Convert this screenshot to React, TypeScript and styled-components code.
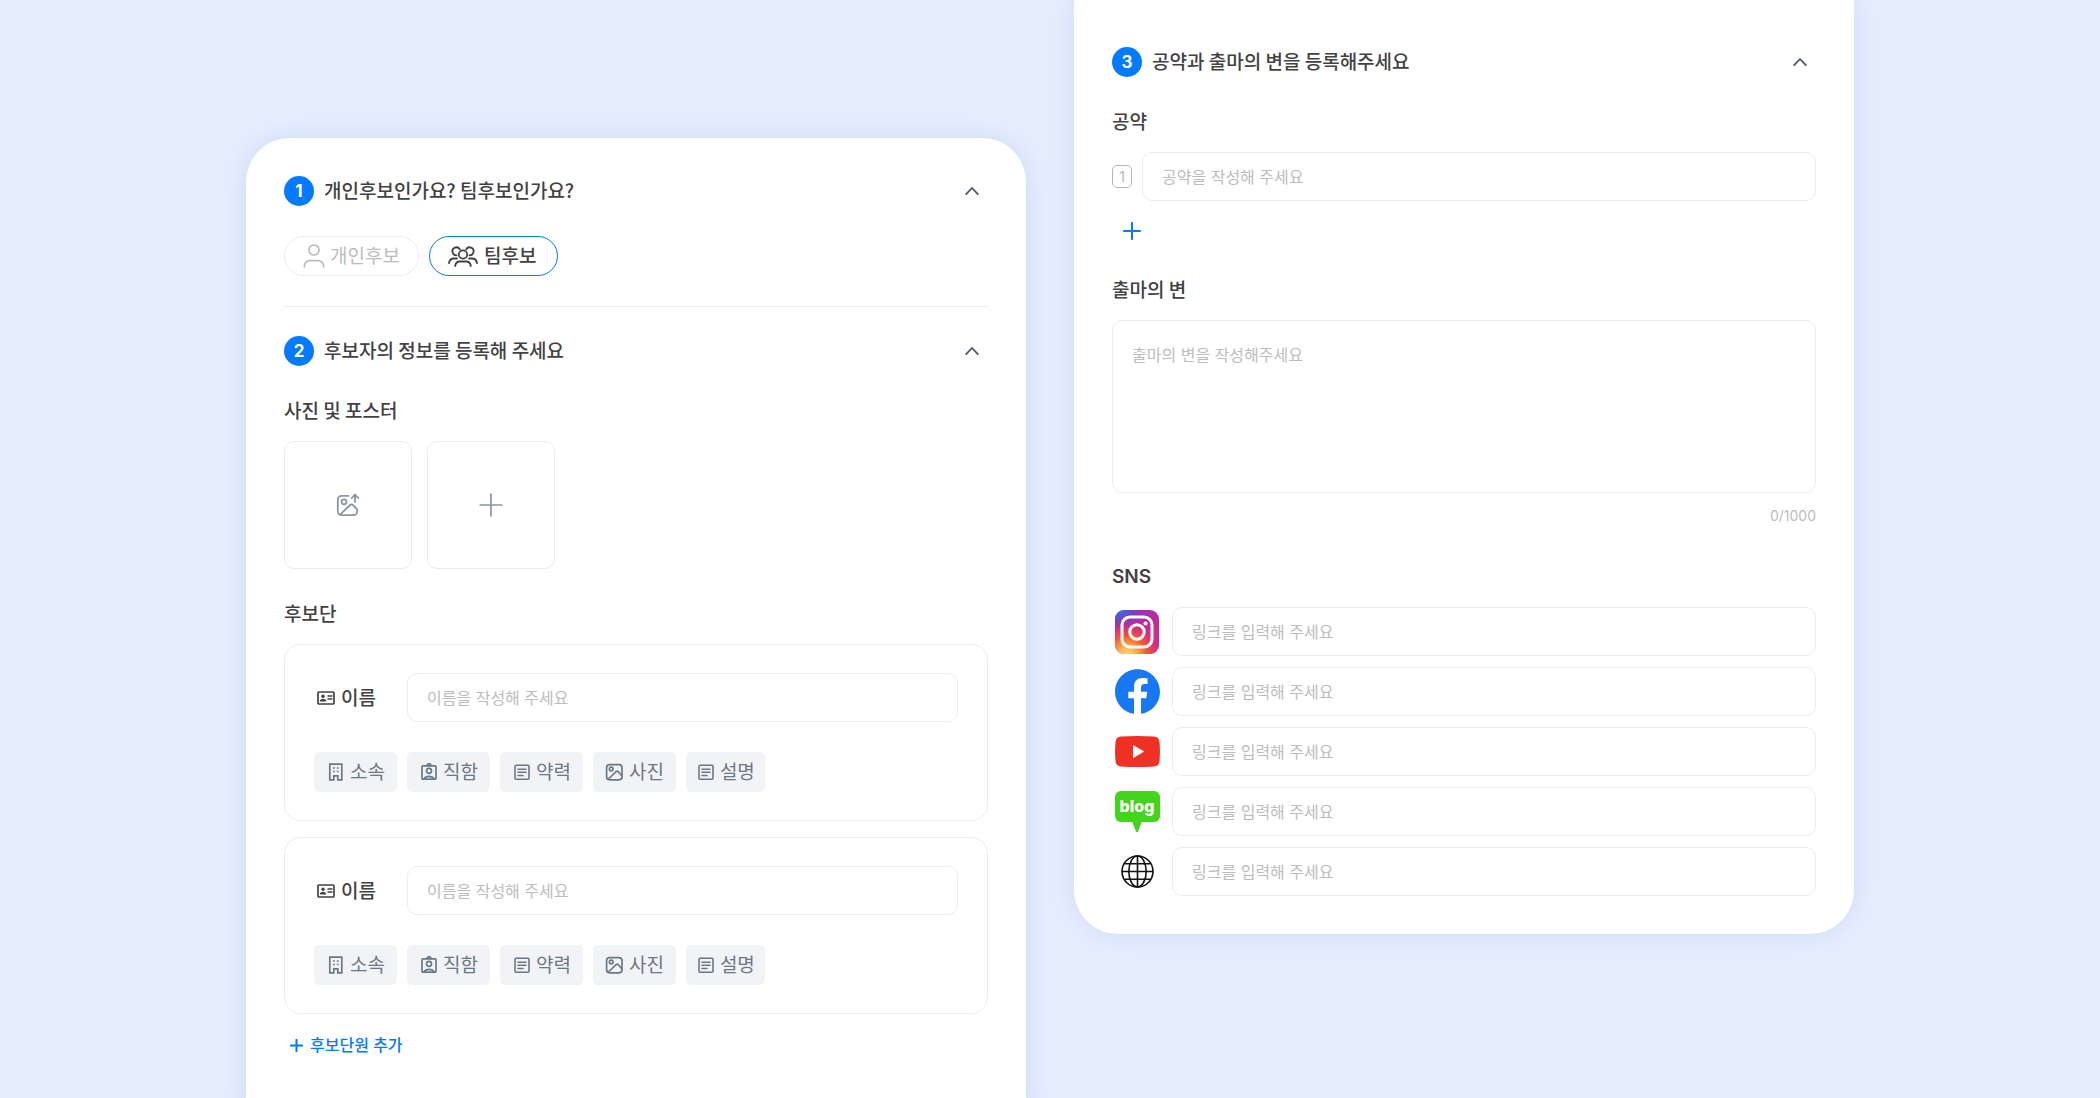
import React, { useState } from 'react';
import styled, { createGlobalStyle } from 'styled-components';

const color = {
  page: '#e6edfd',
  card: '#ffffff',
  line: '#ececed',
  text: '#424242',
  blue: '#047bff',
  placeholder: '#bcbcbc',
  slate: '#6b7887',
  slateLight: '#8a95a5',
  chip: '#f2f3f6',
};

const fieldFont = 'Inter, "Noto Sans CJK KR", sans-serif';

const GlobalStyle = createGlobalStyle`
  *, *::before, *::after { box-sizing: border-box; }
  body {
    margin: 0;
    background: ${color.page};
    color: ${color.text};
    font-family: "Noto Sans CJK KR", "Noto Sans", sans-serif;
  }
  button, input, textarea { font: inherit; color: inherit; }
  h2, h3 { margin: 0; }
`;

const Page = styled.main`
  display: grid;
  grid-template-columns: repeat(2, minmax(0, 780px));
  justify-content: center;
  column-gap: 48px;
  height: 100vh;
  overflow: hidden;
`;

const Card = styled.form`
  background: ${color.card};
  box-shadow: 0 0 24px rgba(150, 180, 245, 0.32);
`;

const LeftCard = styled(Card)`
  margin-top: 138px;
  padding: 38px 38px 60px;
  border-radius: 44px 44px 0 0;
`;

const RightCard = styled(Card)`
  align-self: start;
  padding: 47px 38px 38px;
  border-radius: 0 0 44px 44px;
`;

const Header = styled.header`
  display: flex;
  align-items: center;
  gap: 10px;
  height: 30px;
`;

const StepNumber = styled.span`
  display: grid;
  place-items: center;
  width: 30px;
  height: 30px;
  border-radius: 50%;
  background: ${color.blue};
  color: #fff;
  font: 700 17px/30px Inter, sans-serif;
`;

const Title = styled.h2`
  flex: 1;
  padding-bottom: 2px;
  font-size: 19px;
  line-height: 28px;
  font-weight: 500;
`;

const IconButton = styled.button`
  display: grid;
  place-items: center;
  width: 32px;
  height: 28px;
  padding: 0;
  border: 0;
  background: none;
  color: #4a5766;
  cursor: pointer;
`;

const AddPledge = styled(IconButton)`
  width: 40px;
  margin-top: 16px;
  color: ${color.blue};
`;

const Divider = styled.hr`
  height: 1px;
  margin: 30px 0 29px;
  border: 0;
  background: ${color.line};
`;

const Label = styled.h3`
  margin: 32px 0 19px;
  font-size: 19px;
  line-height: 24px;
  font-weight: 500;
`;

const LatinLabel = styled(Label)`
  margin: 39px 0 18px;
  font-family: Inter, sans-serif;
  font-weight: 600;
`;

const PillGroup = styled.div`
  display: flex;
  gap: 10px;
  margin-top: 30px;
`;

const Pill = styled.label<{ $active: boolean }>`
  display: flex;
  align-items: center;
  gap: ${(p) => (p.$active ? 6 : 5)}px;
  height: 40px;
  padding: 0 ${(p) => (p.$active ? 21 : 18)}px 0 18px;
  border: 1px solid ${(p) => (p.$active ? color.blue : color.line)};
  border-radius: 20px;
  color: ${(p) => (p.$active ? color.text : color.placeholder)};
  font-size: 19px;
  line-height: 28px;
  font-weight: ${(p) => (p.$active ? 500 : 400)};
  cursor: pointer;

  span { padding-bottom: 2px; }
`;

const HiddenRadio = styled.input`
  appearance: none;
  position: absolute;
  width: 1px;
  height: 1px;
  margin: 0;
  opacity: 0;
`;

const Uploads = styled.div`
  display: flex;
  gap: 15px;
`;

const UploadTile = styled.button`
  display: grid;
  place-items: center;
  width: 128px;
  height: 128px;
  padding: 0;
  border: 1px solid ${color.line};
  border-radius: 10px;
  background: none;
  color: ${color.slateLight};
  cursor: pointer;
`;

const Members = styled.div`
  display: grid;
  gap: 16px;
`;

const Member = styled.section`
  padding: 28px 29px;
  border: 1px solid ${color.line};
  border-radius: 16px;
`;

const NameRow = styled.div`
  display: grid;
  grid-template-columns: 83px 1fr;
  align-items: center;
  gap: 10px;
`;

const NameLabel = styled.label`
  display: flex;
  align-items: center;
  gap: 6px;
  padding-left: 3px;
  font-size: 19px;
  line-height: 28px;
  font-weight: 500;

  span { padding-bottom: 2px; }
`;

const TextField = styled.input`
  flex: 1;
  min-width: 0;
  width: 100%;
  height: 49px;
  padding: 0 19px;
  border: 1px solid ${color.line};
  border-radius: 10px;
  outline: none;
  background: none;
  font-family: ${fieldFont};
  font-size: 16px;
  &::placeholder { color: ${color.placeholder}; opacity: 1; }
`;

const TextBox = styled.textarea`
  display: block;
  width: 100%;
  height: 173px;
  padding: 22px 19px;
  border: 1px solid ${color.line};
  border-radius: 10px;
  outline: none;
  resize: none;
  background: none;
  font-family: ${fieldFont};
  font-size: 16px;
  line-height: 24px;
  &::placeholder { color: ${color.placeholder}; opacity: 1; }
`;

const Chips = styled.div`
  display: flex;
  gap: 10px;
  margin-top: 30px;
`;

const Chip = styled.button<{ $compact?: boolean }>`
  display: flex;
  align-items: center;
  gap: 6px;
  height: 40px;
  padding: 0 ${(p) => (p.$compact ? 10 : 12)}px;
  border: 0;
  border-radius: 5px;
  background: ${color.chip};
  color: ${color.slate};
  font-size: 19px;
  line-height: 28px;
  cursor: pointer;

  span { padding-bottom: 2px; }
`;

const AddMember = styled.button`
  display: flex;
  align-items: center;
  gap: 7px;
  height: 24px;
  margin-top: 19px;
  padding: 0 6px;
  border: 0;
  background: none;
  color: ${color.blue};
  font-family: ${fieldFont};
  font-size: 16px;
  line-height: 24px;
  font-weight: 500;
  cursor: pointer;
`;

const FieldRow = styled.div`
  display: flex;
  align-items: center;
  gap: 10px;
`;

const PledgeNumber = styled.span`
  width: 20px;
  height: 23px;
  border: 1px solid #aeb7c3;
  border-radius: 5px;
  color: #aeb7c3;
  font: 400 14px/21px Inter, sans-serif;
  text-align: center;
`;

const Counter = styled.p`
  margin: 13px 0 0;
  color: ${color.placeholder};
  font: 400 14px/20px Inter, sans-serif;
  text-align: right;
`;

const Links = styled.div`
  display: grid;
  gap: 11px;
`;

const LogoLabel = styled.label`
  display: grid;
  place-items: center;
  width: 50px;
`;

const BlogLogo = styled.span`
  display: block;
  width: 45px;
  color: #fff;
  text-align: center;
  font: 800 16px/30px Inter, sans-serif;

  span {
    display: block;
    height: 31px;
    border-radius: 6px;
    background: #42d51b;
  }

  &::after {
    content: '';
    display: block;
    width: 10px;
    height: 11px;
    margin: 0 auto;
    background: #42d51b;
    clip-path: polygon(0 0, 100% 0, 60% 90%, 50% 100%, 40% 90%);
  }
`;

const Svg = ({ w, h, box, sw = 1.5, children }: {
  w: number; h: number; box?: string; sw?: number; children: React.ReactNode;
}) => (
  <svg width={w} height={h} viewBox={box ?? `0 0 ${w} ${h}`} fill="none" stroke="currentColor"
    strokeWidth={sw} strokeLinecap="round" strokeLinejoin="round" aria-hidden="true">
    {children}
  </svg>
);

const ChevronUp = () => <Svg w={14} h={10} sw={1.8}><path d="M1.2 8.2 7 2l5.8 6.2" /></Svg>;

const Plus = ({ size, sw }: { size: number; sw: number }) => (
  <Svg w={size} h={size} box="0 0 20 20" sw={(sw * 20) / size}><path d="M10 1v18M1 10h18" /></Svg>
);

const PersonIcon = () => (
  <Svg w={22} h={24} sw={1.7}>
    <circle cx="11" cy="6" r="5" />
    <path d="M1.3 23c.2-4 2.7-6.3 6-6.3h7.4c3.3 0 5.8 2.3 6 6.3" />
  </Svg>
);

const TeamIcon = () => (
  <Svg w={30} h={21} sw={1.8}>
    <circle cx="15" cy="8.5" r="4.200" />
    <path d="M7.200 20c.4-2.800 2-4.500 4.600-4.500h6.400c2.600 0 4.200 1.700 4.600 4.500" />
    <path d="M11.800 3.200A4 4 0 1 0 8.600 9.300M18.200 3.200a4 4 0 1 1 3.200 6.100" />
    <path d="M1 17.200c.5-3 2.300-4.700 5-4.700h3M29 17.200c-.5-3-2.300-4.700-5-4.700h-3" />
  </Svg>
);

const UploadImageIcon = () => (
  <Svg w={24} h={24} sw={1.8}>
    <path d="M12.500 2.800H5.500A3.700 3.700 0 0 0 1.800 6.500v12a3.700 3.700 0 0 0 3.700 3.700h12a3.700 3.700 0 0 0 3.700-3.700v-2.200l-4.400-4.300a1.900 1.900 0 0 0-2.700 0L4 21.700" />
    <circle cx="8" cy="8.800" r="2.500" />
    <path d="M19 8.800V1.800M15.700 5 19 1.500 22.300 5" />
  </Svg>
);

const IdCardIcon = () => (
  <Svg w={18} h={14} sw={1.7}>
    <rect x="1" y="1" width="16" height="12" rx="1" />
    <circle cx="6" cy="5.200" r="1.700" fill="currentColor" stroke="none" />
    <path d="M2.800 10.400c0-1.900 1.400-2.700 3.200-2.700s3.200.8 3.200 2.700z" fill="currentColor" stroke="none" />
    <path d="M11 5h4M11 8h4" strokeWidth="1.400" />
  </Svg>
);

const BuildingIcon = () => (
  <Svg w={18} h={18} sw={1.7}>
    <path d="M3.800 1.200h12v15.600h-4v-4h-4v4h-4z" strokeLinejoin="miter" />
    <path d="M7.900 5h.1M11.700 5h.1M7.900 8.500h.1M11.700 8.500h.1" strokeWidth="1.700" strokeLinecap="square" />
  </Svg>
);

const BadgeIcon = () => (
  <Svg w={18} h={18} sw={1.7}>
    <rect x="3" y="2.800" width="14" height="13.400" rx="1" />
    <circle cx="10" cy="7.800" r="2.500" />
    <path d="M5 16c1-2 3-2.700 5-2.700s4 .7 5 2.700M8 2.500a2 1.700 0 0 1 4 0" />
  </Svg>
);

const DocIcon = () => (
  <Svg w={18} h={18} sw={1.6}>
    <rect x="3" y="2.300" width="14" height="14" rx="1" />
    <path d="M6 6.200h8M6 9.300h8M6 12.500h5" />
  </Svg>
);

const PhotoIcon = () => (
  <Svg w={18} h={18} sw={1.7}>
    <rect x="1.600" y="1.600" width="15.400" height="15.200" rx="3" />
    <circle cx="6.200" cy="6" r="1.800" />
    <path d="m3.400 16 7.700-7.300a1.500 1.500 0 0 1 2.200 0l3.500 4" />
  </Svg>
);

const InstagramLogo = () => (
  <svg width="44" height="44" viewBox="0 0 44 44" aria-hidden="true">
    <defs>
      <linearGradient id="igBase" x1="0" y1="0" x2="1" y2="1">
        <stop offset="0" stopColor="#5a3fc4" />
        <stop offset=".35" stopColor="#a52fb4" />
        <stop offset="1" stopColor="#e32a6c" />
      </linearGradient>
      <radialGradient id="igWarm" cx=".27" cy="1.05" r=".95">
        <stop offset="0" stopColor="#fedb7a" />
        <stop offset=".2" stopColor="#fdbb55" />
        <stop offset=".48" stopColor="#f8592f" />
        <stop offset=".75" stopColor="#d92c7c" stopOpacity=".7" />
        <stop offset="1" stopColor="#c32aa0" stopOpacity="0" />
      </radialGradient>
      <radialGradient id="igCool" cx=".15" cy="0" r=".45">
        <stop offset="0" stopColor="#4070e0" />
        <stop offset="1" stopColor="#6a3cc4" stopOpacity="0" />
      </radialGradient>
    </defs>
    <rect width="44" height="44" rx="9" fill="url(#igBase)" />
    <rect width="44" height="44" rx="9" fill="url(#igWarm)" />
    <rect width="44" height="44" rx="9" fill="url(#igCool)" />
    <rect x="7" y="7" width="30" height="30" rx="8" fill="none" stroke="#fff" strokeWidth="3" />
    <circle cx="22" cy="22" r="7.200" fill="none" stroke="#fff" strokeWidth="3" />
    <circle cx="30.500" cy="13.500" r="2" fill="#fff" />
  </svg>
);

const FacebookLogo = () => (
  <svg width="45" height="45" viewBox="0 0 24 24" aria-hidden="true">
    <path fill="#1877f2" d="M24 12.073c0-6.627-5.373-12-12-12s-12 5.373-12 12c0 5.990 4.388 10.954 10.125 11.854v-8.385H7.078v-3.470h3.047V9.430c0-3.007 1.792-4.669 4.533-4.669 1.312 0 2.686.235 2.686.235v2.953H15.830c-1.491 0-1.956.925-1.956 1.874v2.250h3.328l-.532 3.470h-2.796v8.385C19.612 23.027 24 18.062 24 12.073z" />
  </svg>
);

const YoutubeLogo = () => (
  <svg width="45" height="31" viewBox="0 0 45 31" aria-hidden="true">
    <path fill="#ee3124" d="M6 .6Q22.500-.4 39 .6q5 .3 5.500 5.400.9 9.500 0 19-.5 5.100-5.500 5.400-16.500 1-33 0Q1 30.100.5 25q-.9-9.500 0-19Q1 .9 6 .6z" />
    <path fill="#fff" d="M18 9v13.200l11.300-6.600z" />
  </svg>
);

const GlobeLogo = () => (
  <svg width="33" height="33" viewBox="0 0 33 33" fill="none" stroke="#111" strokeWidth="1.600" aria-hidden="true">
    <circle cx="16.500" cy="16.500" r="15.500" />
    <ellipse cx="16.500" cy="16.500" rx="8.700" ry="15.500" />
    <path d="M16.500 1v31M1 16.500h31M4 8.700h25M4 24.300h25" />
  </svg>
);

const links = [
  { name: '인스타그램', logo: <InstagramLogo /> },
  { name: '페이스북', logo: <FacebookLogo /> },
  { name: '유튜브', logo: <YoutubeLogo /> },
  { name: '블로그', logo: <BlogLogo><span>blog</span></BlogLogo> },
  { name: '웹사이트', logo: <GlobeLogo /> },
];

const details = [
  { text: '소속', icon: <BuildingIcon /> },
  { text: '직함', icon: <BadgeIcon /> },
  { text: '약력', icon: <DocIcon /> },
  { text: '사진', icon: <PhotoIcon /> },
  { text: '설명', icon: <DocIcon />, compact: true },
];

const StepHeader = ({ step, title }: { step: number; title: string }) => (
  <Header>
    <StepNumber>{step}</StepNumber>
    <Title>{title}</Title>
    <IconButton type="button" aria-label="접기"><ChevronUp /></IconButton>
  </Header>
);

const MemberCard = ({ id }: { id: number }) => (
  <Member>
    <NameRow>
      <NameLabel htmlFor={`name-${id}`}><IdCardIcon /><span>이름</span></NameLabel>
      <TextField id={`name-${id}`} placeholder="이름을 작성해 주세요" />
    </NameRow>
    <Chips>
      {details.map((d) => (
        <Chip key={d.text} type="button" $compact={d.compact}>{d.icon}<span>{d.text}</span></Chip>
      ))}
    </Chips>
  </Member>
);

export default function App() {
  const [kind, setKind] = useState('team');
  const [members, setMembers] = useState([1, 2]);
  const [speech, setSpeech] = useState('');

  return (
    <>
      <GlobalStyle />
      <Page>
        <LeftCard>
          <StepHeader step={1} title="개인후보인가요? 팀후보인가요?" />
          <PillGroup role="radiogroup">
            <Pill $active={kind === 'solo'}>
              <HiddenRadio type="radio" name="kind" checked={kind === 'solo'} onChange={() => setKind('solo')} />
              <PersonIcon /><span>개인후보</span>
            </Pill>
            <Pill $active={kind === 'team'}>
              <HiddenRadio type="radio" name="kind" checked={kind === 'team'} onChange={() => setKind('team')} />
              <TeamIcon /><span>팀후보</span>
            </Pill>
          </PillGroup>
          <Divider />
          <StepHeader step={2} title="후보자의 정보를 등록해 주세요" />
          <Label>사진 및 포스터</Label>
          <Uploads>
            <UploadTile type="button" aria-label="사진 올리기"><UploadImageIcon /></UploadTile>
            <UploadTile type="button" aria-label="사진 추가"><Plus size={24} sw={1.7} /></UploadTile>
          </Uploads>
          <Label>후보단</Label>
          <Members>
            {members.map((id) => <MemberCard key={id} id={id} />)}
          </Members>
          <AddMember type="button" onClick={() => setMembers([...members, members.length + 1])}>
            <Plus size={13} sw={2} />후보단원 추가
          </AddMember>
        </LeftCard>

        <RightCard>
          <StepHeader step={3} title="공약과 출마의 변을 등록해주세요" />
          <Label>공약</Label>
          <FieldRow>
            <PledgeNumber>1</PledgeNumber>
            <TextField aria-label="공약" placeholder="공약을 작성해 주세요" />
          </FieldRow>
          <AddPledge type="button" aria-label="공약 추가"><Plus size={18} sw={2} /></AddPledge>
          <Label>출마의 변</Label>
          <TextBox aria-label="출마의 변" placeholder="출마의 변을 작성해주세요" maxLength={1000}
            value={speech} onChange={(e) => setSpeech(e.target.value)} />
          <Counter>{speech.length}/1000</Counter>
          <LatinLabel>SNS</LatinLabel>
          <Links>
            {links.map((l, i) => (
              <FieldRow key={l.name}>
                <LogoLabel htmlFor={`link-${i}`}>{l.logo}</LogoLabel>
                <TextField id={`link-${i}`} aria-label={l.name} placeholder="링크를 입력해 주세요" />
              </FieldRow>
            ))}
          </Links>
        </RightCard>
      </Page>
    </>
  );
}
